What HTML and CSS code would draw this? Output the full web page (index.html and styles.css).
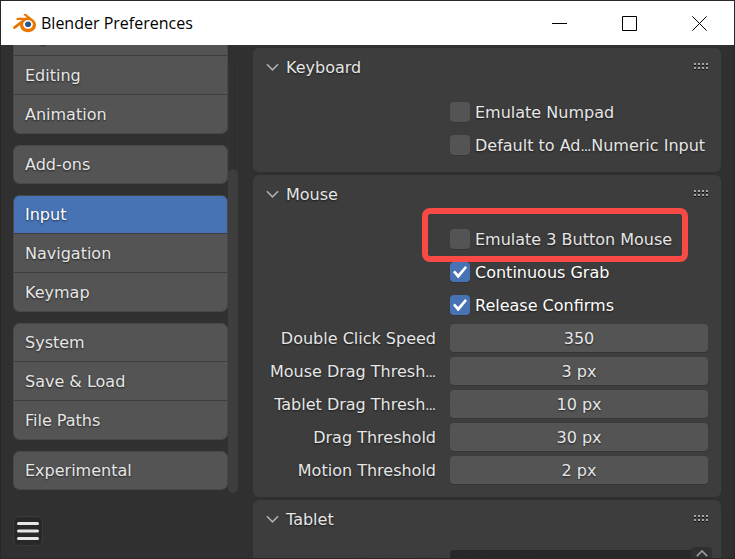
FILE: index.html
```html
<!DOCTYPE html>
<html lang="en">
<head>
<meta charset="utf-8">
<title>Blender Preferences</title>
<link rel="stylesheet" href="styles.css">
</head>
<body>
<svg class="defs" aria-hidden="true">
  <symbol id="chevron" viewBox="0 0 14 8"><path d="M1 1l6 6 6-6" fill="none" stroke="currentColor" stroke-width="1.700"/></symbol>
  <symbol id="grip" viewBox="0 0 14 8">
    <path d="M0 2.500h14M0 6.500h14" stroke="#111" stroke-dasharray="2 2"/>
    <path d="M0 1h14M0 5h14" stroke="#a6a6a6" stroke-width="2" stroke-dasharray="2 2"/>
  </symbol>
</svg>
<div class="window">
  <header class="titlebar">
    <svg class="logo" viewBox="0 2 24 20" aria-hidden="true">
      <path fill="#265787" d="M12.51 13.214c.046-.8.438-1.506 1.03-2.006a3.424 3.424 0 0 1 2.212-.79c.85 0 1.631.3 2.211.79.592.5.983 1.206 1.028 2.005.045.823-.285 1.586-.865 2.153a3.389 3.389 0 0 1-2.374.938 3.393 3.393 0 0 1-2.376-.938c-.58-.567-.91-1.33-.865-2.152"/>
      <path fill="#ea7600" d="M7.35 14.831c.006.314.106.922.256 1.398a7.372 7.372 0 0 0 1.593 2.757 8.227 8.227 0 0 0 2.787 2.001 8.947 8.947 0 0 0 3.66.76 8.964 8.964 0 0 0 3.657-.772 8.285 8.285 0 0 0 2.785-2.01 7.428 7.428 0 0 0 1.592-2.762 6.964 6.964 0 0 0 .25-3.074 7.123 7.123 0 0 0-1.016-2.779 7.764 7.764 0 0 0-1.852-2.043h.002L13.566 2.55l-.02-.015c-.492-.378-1.319-.376-1.86.002-.547.382-.609 1.015-.123 1.415l-.001.001 3.126 2.543-9.53.01h-.013c-.788.001-1.545.518-1.695 1.172-.154.665.38 1.217 1.2 1.22V8.9l4.83-.01-8.62 6.617-.034.025c-.813.622-1.075 1.658-.563 2.315.52.667 1.625.668 2.447.004L7.414 14s-.069.52-.063.831zm12.09 1.741c-.97.988-2.326 1.548-3.795 1.55-1.47.004-2.827-.552-3.797-1.538a4.51 4.51 0 0 1-1.036-1.622 4.282 4.282 0 0 1 .282-3.519 4.702 4.702 0 0 1 1.153-1.371c.942-.768 2.141-1.183 3.396-1.185 1.256-.002 2.455.41 3.398 1.175.48.391.87.854 1.152 1.367a4.28 4.28 0 0 1 .522 1.706 4.236 4.236 0 0 1-.239 1.811 4.54 4.54 0 0 1-1.035 1.626"/>
    </svg>
    <h1 class="title">Blender Preferences</h1>
    <button class="caption" aria-label="Minimize"><svg viewBox="0 0 15 15"><path d="M0 7.500h15"/></svg></button>
    <button class="caption" aria-label="Maximize"><svg viewBox="0 0 15 15"><path d="M.5.5h14v14H.5z"/></svg></button>
    <button class="caption" aria-label="Close"><svg viewBox="0 0 15 15"><path d="M.3.3l14.4 14.4M14.7.3L.3 14.7"/></svg></button>
  </header>

  <div class="body">
    <aside class="sidebar">
      <nav class="nav">
        <div class="groups">
          <div class="group"><button>Lights</button><button>Editing</button><button>Animation</button></div>
          <div class="group"><button>Add-ons</button></div>
          <div class="group"><button class="active">Input</button><button>Navigation</button><button>Keymap</button></div>
          <div class="group"><button>System</button><button>Save &amp; Load</button><button>File Paths</button></div>
          <div class="group"><button>Experimental</button></div>
        </div>
        <div class="track"><div class="thumb"></div></div>
      </nav>
      <button class="menu" aria-label="Menu"><svg viewBox="0 0 22 18"><path d="M1.500 1.500h19M1.500 9h19M1.500 16.500h19"/></svg></button>
    </aside>

    <main class="panels">
      <section class="panel">
        <h2 class="head"><svg class="chev"><use href="#chevron"/></svg><span>Keyboard</span><svg class="grip"><use href="#grip"/></svg></h2>
        <div class="rows">
          <label class="check"><input type="checkbox"><span>Emulate Numpad</span></label>
          <label class="check"><input type="checkbox"><span>Default to Ad<span class="dots">…</span>Numeric Input</span></label>
        </div>
      </section>

      <section class="panel">
        <h2 class="head"><svg class="chev"><use href="#chevron"/></svg><span>Mouse</span><svg class="grip"><use href="#grip"/></svg></h2>
        <div class="rows">
          <label class="check marked"><input type="checkbox"><span>Emulate 3 Button Mouse</span></label>
          <label class="check"><input type="checkbox" checked><span>Continuous Grab</span></label>
          <label class="check"><input type="checkbox" checked><span>Release Confirms</span></label>
          <label class="name" for="click">Double Click Speed</label><input class="field" id="click" value="350">
          <label class="name" for="mdrag">Mouse Drag Thresh<span class="dots">…</span></label><input class="field" id="mdrag" value="3 px">
          <label class="name" for="tdrag">Tablet Drag Thresh<span class="dots">…</span></label><input class="field" id="tdrag" value="10 px">
          <label class="name" for="drag">Drag Threshold</label><input class="field" id="drag" value="30 px">
          <label class="name" for="motion">Motion Threshold</label><input class="field" id="motion" value="2 px">
        </div>
      </section>

      <section class="panel">
        <h2 class="head"><svg class="chev"><use href="#chevron"/></svg><span>Tablet</span><svg class="grip"><use href="#grip"/></svg></h2>
        <div class="rows">
          <label class="name" for="api">Tablet API</label><select class="field dropdown" id="api"><option>Automatic</option></select>
        </div>
      </section>
    </main>
    <button class="expand" aria-label="Show header"><svg viewBox="0 0 14 8"><path d="M1 7l6-6 6 6"/></svg></button>
  </div>
</div>
</body>
</html>
```
FILE: styles.css
```css
* { box-sizing: border-box; }
body {
  margin: 0;
  font: 16px/20px "DejaVu Sans", sans-serif;
  color: #e6e6e6;
  background: #303030;
}
button, input, select { margin: 0; font: inherit; color: inherit; border: 0; }
.defs { position: absolute; width: 0; height: 0; }
.window {
  display: flex;
  flex-direction: column;
  height: 100vh;
  border: 1px solid #2a2729;
  overflow: hidden;
}

.titlebar {
  display: flex;
  flex: none;
  align-items: center;
  height: 44px;
  padding-left: 12px;
  color: #000;
  background: #fff;
}
.logo { width: 23px; height: 20px; }
.title {
  flex: 1;
  margin: 0 0 0 5px;
  font: 16px/24px "Open Sans", sans-serif;
}
.caption {
  display: grid;
  place-items: center;
  width: 70px;
  height: 44px;
  padding: 0;
  background: none;
}
.caption svg { width: 15px; height: 15px; fill: none; stroke: #000; }

.body {
  position: relative;
  display: flex;
  flex: 1;
  min-height: 0;
  text-shadow: 0 1px 2px rgba(0, 0, 0, .6);
}
.sidebar {
  display: flex;
  flex: none;
  flex-direction: column;
  width: 240px;
  padding: 0 3px 12px 12px;
}
.nav {
  display: flex;
  flex: 1;
  min-height: 0;
  margin-bottom: 26px;
}
.groups {
  display: flex;
  flex: 1;
  flex-direction: column;
  justify-content: flex-end;
  gap: 11px;
  overflow: hidden;
}
.group {
  flex: none;
  border: 1px solid #484848;
  border-radius: 6px;
  overflow: hidden;
}
.group button {
  display: block;
  width: 100%;
  height: 39px;
  padding: 1px 11px 0;
  text-align: left;
  text-shadow: inherit;
  background: #545454;
  border-top: 1px solid #3d3d3d;
}
.group button:first-child { height: 37px; padding-top: 0; border-top: 0; }
.group .active { color: #fff; background: #4772b3; }
.track {
  width: 10px;
  margin-top: 13px;
  border-radius: 5px;
  box-shadow: inset 0 0 0 1px #343434;
}
.thumb {
  height: 75%;
  margin-top: 111px;
  border-radius: 5px;
  background: #3e3e3e;
}
.menu {
  display: grid;
  place-items: center;
  width: 30px;
  height: 30px;
  padding: 0;
  background: #282828;
  border: 1px solid #3b3b3b;
  border-radius: 6px;
}
.menu svg {
  width: 22px;
  height: 18px;
  stroke: #e6e6e6;
  stroke-width: 3;
  stroke-linecap: round;
}

.panels {
  display: flex;
  flex: 1;
  flex-direction: column;
  gap: 3px;
  min-width: 0;
  padding: 3px 13px 0 12px;
  overflow: hidden;
}
.panel {
  flex: none;
  padding: 0 13px 13px;
  background: #3d3d3d;
  border-radius: 6px;
}
.head {
  display: flex;
  align-items: center;
  height: 38px;
  margin: 0 0 12px;
  font: inherit;
}
.head span, .check > span { padding-top: 2px; }
.chev { width: 13px; height: 8px; margin-right: 7px; color: #b0b0b0; }
.grip { width: 14px; height: 8px; margin-left: auto; }
.rows {
  display: grid;
  grid-template-columns: 170px 1fr;
  grid-auto-rows: 28px;
  gap: 5px 14px;
}
.name { line-height: 30px; text-align: right; white-space: nowrap; }
.dots { font-family: Roboto, sans-serif; line-height: 1; }
.check {
  position: relative;
  grid-column: 2;
  display: flex;
  align-items: center;
  gap: 5px;
  white-space: nowrap;
}
.check input {
  display: grid;
  place-items: center;
  width: 20px;
  height: 20px;
  appearance: none;
  background: #545454;
  border-radius: 4px;
  box-shadow: 0 1px #363636;
}
.check:has(:checked) { color: #fff; }
.check input:checked { background: #4772b3; }
.check input:checked::before {
  content: "";
  width: 14px;
  height: 12px;
  background: #fff;
  clip-path: polygon(0 53%, 13% 38%, 37% 67%, 87% 0, 100% 14%, 40% 100%, 34% 100%);
}
.marked::after {
  content: "";
  position: absolute;
  z-index: 1;
  inset: -17px 20px -9px -28px;
  border: 6px solid #f94a46;
  border-radius: 8px;
  pointer-events: none;
}
.field {
  width: 100%;
  min-width: 0;
  height: 28px;
  padding: 0 10px;
  text-align: center;
  text-shadow: inherit;
  background: #545454;
  border-radius: 4px;
  box-shadow: 0 1px #363636;
}
.dropdown { padding-top: 1px; text-align: left; appearance: none; background: #282828; }
.expand {
  position: absolute;
  right: 22px;
  bottom: 0;
  display: grid;
  justify-items: center;
  align-content: start;
  width: 21px;
  height: 11px;
  padding: 3px 0 0;
  background: #303030;
  border-radius: 4px 4px 0 0;
}
.expand svg { width: 12px; height: 7px; fill: none; stroke: #999; stroke-width: 2; }
```
